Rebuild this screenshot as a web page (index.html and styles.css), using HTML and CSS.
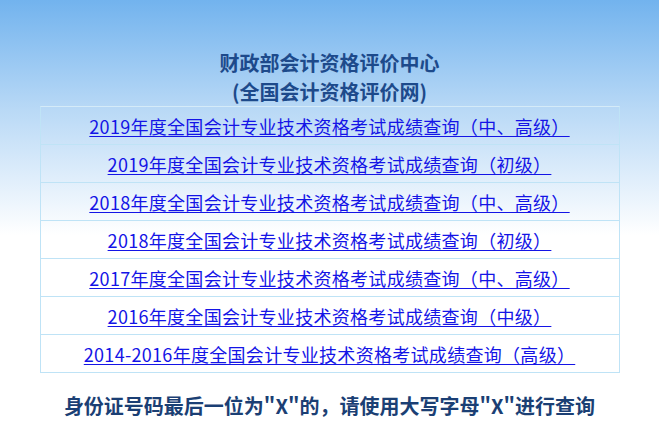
FILE: index.html
```html
<!DOCTYPE html>
<html lang="zh-CN">
<head>
<meta charset="utf-8">
<title>财政部会计资格评价中心</title>
<link rel="stylesheet" href="styles.css">
</head>
<body>
<div class="page">
  <header class="head">
    <h1 class="title">财政部会计资格评价中心<br>(全国会计资格评价网)</h1>
  </header>
  <ul class="links">
    <li class="row"><a href="#">2019年度全国会计专业技术资格考试成绩查询（中、高级）</a></li>
    <li class="row"><a href="#">2019年度全国会计专业技术资格考试成绩查询（初级）</a></li>
    <li class="row"><a href="#">2018年度全国会计专业技术资格考试成绩查询（中、高级）</a></li>
    <li class="row"><a href="#">2018年度全国会计专业技术资格考试成绩查询（初级）</a></li>
    <li class="row"><a href="#">2017年度全国会计专业技术资格考试成绩查询（中、高级）</a></li>
    <li class="row"><a href="#">2016年度全国会计专业技术资格考试成绩查询（中级）</a></li>
    <li class="row"><a href="#">2014-2016年度全国会计专业技术资格考试成绩查询（高级）</a></li>
  </ul>
  <p class="note">身份证号码最后一位为"X"的，请使用大写字母"X"进行查询</p>
</div>
</body>
</html>
```
FILE: styles.css
```css
html, body {
  margin: 0;
  padding: 0;
}
body {
  min-height: 445px;
  background: linear-gradient(to bottom, #72b3ee 0px, #b9d9f6 110px, #ffffff 235px, #ffffff 100%);
  font-family: "Noto Sans CJK SC", "Noto Sans", sans-serif;
}
.page {
  width: 580px;
  margin: 0 auto;
}
.head {
  padding-top: 48px;
}
.title {
  margin: 0;
  text-align: center;
  font-size: 20px;
  line-height: 29px;
  font-weight: bold;
  color: #1d4a8b;
}
.links {
  list-style: none;
  margin: 0;
  padding: 0;
  border: 1px solid #bfe3f6;
  border-top-color: #d5ebf8;
}
.row {
  height: 37px;
  display: flex;
  align-items: center;
  justify-content: center;
  border-top: 1px solid #bfe3f6;
  font-size: 18px;
  letter-spacing: 0.3px;
}
.row:first-child {
  border-top: none;
}
.row a {
  color: #1414e6;
  text-decoration: underline;
  text-underline-offset: 2px;
}
.note {
  margin: 18px 0 0;
  text-align: center;
  font-size: 20px;
  line-height: 29px;
  font-weight: bold;
  color: #1b3f74;
  white-space: nowrap;
}
```
